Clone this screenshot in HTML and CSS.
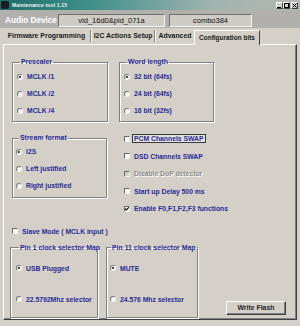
FILE: index.html
```html
<!DOCTYPE html>
<html>
<head>
<meta charset="utf-8">
<link rel="stylesheet" href="styles.css">
</head>
<body>
<div class="window">
  <div class="titlebar">
    <span class="app-icon"></span>
    <span class="title">Maintenance tool 1.15</span>
    <div class="tb-btns">
      <span class="tbb"><svg width="5" height="5" viewBox="0 0 5 5"><rect x="0" y="4" width="4" height="1" fill="#000"/></svg></span>
      <span class="tbb"><svg width="5" height="5" viewBox="0 0 5 5"><rect x="0.5" y="0.5" width="4" height="4" fill="none" stroke="#000"/></svg></span>
      <span class="tbb close"><svg width="5" height="5" viewBox="0 0 5 5"><path d="M0.5 0.5L4.5 4.5M4.5 0.5L0.5 4.5" stroke="#000" stroke-width="1"/></svg></span>
    </div>
  </div>

  <div class="devbar">
    <span class="devlabel">Audio Device</span>
    <div class="field f1">vid_16d0&amp;pid_071a</div>
    <div class="field f2">combo384</div>
  </div>

  <div class="tabs">
    <span class="tab t1">Firmware Programming</span>
    <span class="sep"></span>
    <span class="tab t2">I2C Actions Setup</span>
    <span class="sep"></span>
    <span class="tab t3">Advanced</span>
    <span class="tab active">Configuration bits</span>
  </div>

  <div class="panel">
    <div class="row r1">
      <fieldset class="group g-pre">
        <legend>Prescaler</legend>
        <div class="opts">
          <div class="opt"><span class="radio on"></span><span>MCLK /1</span></div>
          <div class="opt"><span class="radio"></span><span>MCLK /2</span></div>
          <div class="opt"><span class="radio"></span><span>MCLK /4</span></div>
        </div>
      </fieldset>
      <fieldset class="group g-word">
        <legend>Word length</legend>
        <div class="opts">
          <div class="opt"><span class="radio on"></span><span>32 bit (64fs)</span></div>
          <div class="opt"><span class="radio"></span><span>24 bit (64fs)</span></div>
          <div class="opt"><span class="radio"></span><span>16 bit (32fs)</span></div>
        </div>
      </fieldset>
    </div>

    <div class="row r2">
      <fieldset class="group g-stream">
        <legend>Stream format</legend>
        <div class="opts">
          <div class="opt"><span class="radio on"></span><span>I2S</span></div>
          <div class="opt"><span class="radio"></span><span>Left justified</span></div>
          <div class="opt"><span class="radio"></span><span>Right justified</span></div>
        </div>
      </fieldset>
      <div class="checklist">
        <div class="opt"><span class="check"></span><span class="focus">PCM Channels SWAP</span></div>
        <div class="opt"><span class="check"></span><span>DSD Channels SWAP</span></div>
        <div class="opt disabled"><span class="check"></span><span>Disable DoP detector</span></div>
        <div class="opt"><span class="check"></span><span>Start up Delay 500 ms</span></div>
        <div class="opt"><span class="check on"><svg width="4" height="4" viewBox="0 0 4 4"><path d="M0 1.6L1.3 3L4 0.3" fill="none" stroke="#000" stroke-width="1.1"/></svg></span><span>Enable F0,F1,F2,F3 functions</span></div>
      </div>
    </div>

    <div class="opt slave"><span class="check"></span><span>Slave Mode ( MCLK input )</span></div>

    <div class="row r3">
      <fieldset class="group g-pin1">
        <legend>Pin 1 clock selector Map</legend>
        <div class="opts tall">
          <div class="opt"><span class="radio on"></span><span>USB Plugged</span></div>
          <div class="opt"><span class="radio"></span><span>22.5792Mhz selector</span></div>
        </div>
      </fieldset>
      <fieldset class="group g-pin11">
        <legend>Pin 11 clock selector Map</legend>
        <div class="opts tall">
          <div class="opt"><span class="radio on"></span><span>MUTE</span></div>
          <div class="opt"><span class="radio"></span><span>24.576 Mhz selector</span></div>
        </div>
      </fieldset>
      <button class="btn">Write Flash</button>
    </div>
  </div>
</div>
</body>
</html>
```
FILE: styles.css
```css
* { box-sizing: border-box; }

body {
  margin: 0;
  background: #d4d0c8;
  font-family: "Liberation Sans", Arial, sans-serif;
}

.window {
  width: 300px;
  height: 326px;
  background: #d4d0c8;
  overflow: hidden;
}

/* title bar */
.titlebar {
  height: 10px;
  display: flex;
  align-items: center;
  padding: 0 2px 0 1px;
  background: linear-gradient(to right, #1d6c6b 0%, #3f8f8b 30%, #9fb3ae 70%, #b6b8b4 100%);
}
.app-icon {
  width: 8px;
  height: 8px;
  background: #1c1c1c;
  border-radius: 2px;
  margin-right: 3px;
}
.title {
  flex: 1;
  color: #f4f4f4;
  font-size: 5px;
  font-weight: bold;
  line-height: 10px;
  letter-spacing: 0.15px;
}
.tb-btns { display: flex; }
.tbb {
  width: 7px;
  height: 7px;
  background: #d4d0c8;
  border: 1px solid;
  border-color: #fff #404040 #404040 #fff;
  display: flex;
  align-items: center;
  justify-content: center;
}
.tbb svg { display: block; }
.tbb.close { margin-left: 1px; }

/* device bar */
.devbar {
  height: 18px;
  display: flex;
  align-items: center;
  padding-left: 5px;
  padding-top: 2px;
  background: #b2b0ac;
}
.devlabel {
  width: 53px;
  color: #ffffff;
  font-size: 8.2px;
  font-weight: bold;
  white-space: nowrap;
}
.field {
  height: 13px;
  border: 1px solid;
  border-color: #6f6f6f #f4f4f4 #f4f4f4 #6f6f6f;
  background: #cfccc5;
  color: #111;
  font-size: 7.5px;
  display: flex;
  align-items: center;
  justify-content: center;
  white-space: nowrap;
}
.f1 { width: 107px; }
.f2 { width: 83px; margin-left: 4px; }

/* tabs */
.tabs {
  height: 16px;
  display: flex;
  align-items: center;
  padding-left: 3px;
}
.tab {
  font-size: 6.9px;
  font-weight: bold;
  color: #1a1a1a;
  white-space: nowrap;
  line-height: 12px;
  text-align: center;
}
.t1 { width: 87px; }
.t2 { width: 62px; }
.t3 { width: 38px; }
.sep {
  width: 2px;
  height: 12px;
  border-left: 1px solid #808080;
  border-right: 1px solid #ffffff;
}
.tab.active {
  align-self: flex-end;
  width: 66px;
  height: 15px;
  padding-top: 1px;
  font-size: 6.5px;
  border: 1px solid;
  border-bottom: none;
  border-color: #ffffff #404040 transparent #ffffff;
  background: #d4d0c8;
  position: relative;
  top: 1px;
}

/* panel */
.panel {
  margin: 0 3px;
  height: 276px;
  border: 1px solid;
  border-color: #ffffff #404040 #404040 #ffffff;
  box-shadow: inset -1px -1px 0 #808080;
  padding-top: 13px;
  color: #2a2a96;
  font-size: 6.8px;
  font-weight: bold;
}

.row { display: flex; }
.r1 { padding-left: 8px; gap: 11px; }
.r2 { padding-left: 8px; margin-top: 12px; }
.r3 { padding-left: 6px; margin-top: 8px; gap: 8px; }

.group {
  margin: 0;
  padding: 0;
  min-width: 0;
  border: 1px solid #808080;
  box-shadow: 1px 1px 0 #ffffff, inset 1px 1px 0 #ffffff;
}
.group legend {
  padding: 0 1px;
  margin-left: 3px;
  line-height: 8px;
  font-size: 6.9px;
  white-space: nowrap;
}
.g-pre { width: 96px; height: 64px; padding-left: 4px; }
.g-word { width: 95px; height: 64px; padding-left: 4px; }
.g-stream { width: 95px; height: 64px; padding-left: 3px; }
.g-pin1 { width: 88px; height: 74px; padding-left: 5px; }
.g-pin11 { width: 92px; height: 74px; padding-left: 3px; }
.g-pin11 legend { margin-left: 1px; }

.opts {
  display: flex;
  flex-direction: column;
  gap: 8px;
  padding-top: 6px;
}
.g-stream .opts { padding-top: 5px; }
.opts.tall { padding-top: 12px; gap: 22px; }

.opt {
  height: 9px;
  display: flex;
  align-items: center;
  gap: 4px;
  white-space: nowrap;
}

.radio {
  width: 6px;
  height: 6px;
  border-radius: 50%;
  border: 1px solid;
  border-color: #7a7a7a #f4f4f4 #f4f4f4 #7a7a7a;
  background: #f6f6f4;
  display: flex;
  align-items: center;
  justify-content: center;
  flex: none;
}
.radio.on::after {
  content: "";
  width: 2px;
  height: 2px;
  border-radius: 50%;
  background: #111;
}

.check {
  width: 6px;
  height: 6px;
  border: 1px solid;
  border-color: #6a6a6a #f4f4f4 #f4f4f4 #6a6a6a;
  background: #f6f6f4;
  flex: none;
  display: flex;
  align-items: center;
  justify-content: center;
}
.check svg { display: block; }

.checklist {
  margin-left: 17px;
  display: flex;
  flex-direction: column;
  gap: 8.5px;
}
.focus {
  outline: 1px solid #3a3a3a;
  outline-offset: 0;
  background: #e4e2dc;
  padding: 0 1px;
  margin-left: -1px;
}
.disabled { color: #8e8c88; text-shadow: 1px 1px 0 #ffffff; }
.disabled .check { background: #d4d0c8; }

.slave {
  margin-top: 13.5px;
  margin-left: 8px;
}

.btn {
  align-self: flex-end;
  margin-left: 20px;
  margin-bottom: 3px;
  width: 60px;
  height: 14px;
  padding: 0;
  background: #d4d0c8;
  border: 1px solid;
  border-color: #ffffff #404040 #404040 #ffffff;
  box-shadow: inset -1px -1px 0 #808080;
  font-family: "Liberation Sans", Arial, sans-serif;
  font-size: 6.9px;
  font-weight: bold;
  color: #1e1e1e;
}
```
